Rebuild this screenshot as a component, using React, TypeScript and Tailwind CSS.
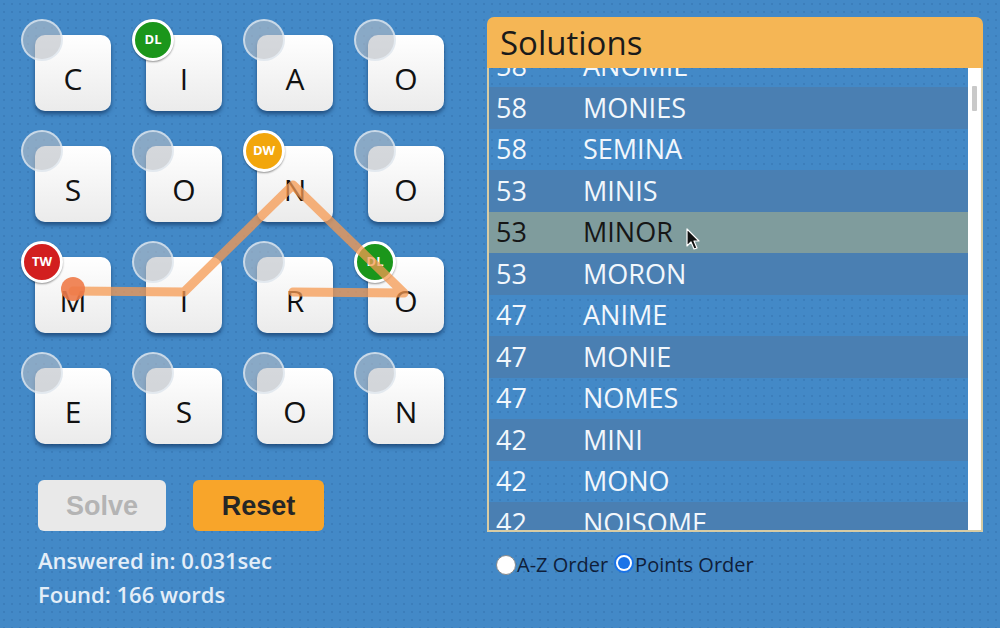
import React from 'react';

type Bonus = 'DL' | 'DW' | 'TW' | null;

const tiles: { letter: string; bonus: Bonus }[] = [
  { letter: 'C', bonus: null },
  { letter: 'I', bonus: 'DL' },
  { letter: 'A', bonus: null },
  { letter: 'O', bonus: null },
  { letter: 'S', bonus: null },
  { letter: 'O', bonus: null },
  { letter: 'N', bonus: 'DW' },
  { letter: 'O', bonus: null },
  { letter: 'M', bonus: 'TW' },
  { letter: 'I', bonus: null },
  { letter: 'R', bonus: null },
  { letter: 'O', bonus: 'DL' },
  { letter: 'E', bonus: null },
  { letter: 'S', bonus: null },
  { letter: 'O', bonus: null },
  { letter: 'N', bonus: null },
];

const solutions: [number, string][] = [
  [58, 'ANOMIE'],
  [58, 'MONIES'],
  [58, 'SEMINA'],
  [53, 'MINIS'],
  [53, 'MINOR'],
  [53, 'MORON'],
  [47, 'ANIME'],
  [47, 'MONIE'],
  [47, 'NOMES'],
  [42, 'MINI'],
  [42, 'MONO'],
  [42, 'NOISOME'],
];

function BonusBadge({ bonus }: { bonus: Bonus }) {
  if (!bonus) {
    return (
      <div className="absolute left-[-14px] top-[-16px] w-[42px] h-[42px] rounded-full bg-[rgba(185,190,196,0.6)] border-2 border-[rgba(235,242,250,0.65)]" />
    );
  }
  const color =
    bonus === 'DL' ? 'bg-[#1b961b]' : bonus === 'DW' ? 'bg-[#f2a60c]' : 'bg-[#d21f1f]';
  return (
    <div
      className={`absolute left-[-14px] top-[-16px] w-[42px] h-[42px] rounded-full ${color} border-[3px] border-white shadow-[0_1px_2px_rgba(0,0,0,0.4)] flex items-center justify-center text-white text-[13px] font-bold font-['Open_Sans',sans-serif]`}
    >
      {bonus}
    </div>
  );
}

export default function App() {
  return (
    <div className="w-[1000px] h-[628px] overflow-hidden flex bg-[#4389c7] bg-[radial-gradient(circle,rgba(25,70,125,0.16)_1px,transparent_1.3px)] bg-[length:8px_8px] font-['Open_Sans',sans-serif]">
      {/* Board */}
      <div className="w-[487px] shrink-0 pl-[35px] pt-[35px]">
        <div className="relative grid grid-cols-[repeat(4,76px)] gap-[35px]">
          {tiles.map((t, i) => (
            <div
              key={i}
              className="relative w-[76px] h-[76px] rounded-[10px] bg-linear-to-b from-white to-[#ebebeb] shadow-[0_3px_4px_rgba(10,40,80,0.6)] flex items-center justify-center pt-[10px] text-[30px] text-[#111]"
            >
              {t.letter}
              <BonusBadge bonus={t.bonus} />
            </div>
          ))}
          <svg className="absolute left-0 top-0 pointer-events-none" width="420" height="420">
            <polyline
              points="38,256 149,257 258,150 369,258 258,257"
              fill="none"
              stroke="#f59a52"
              strokeOpacity="0.75"
              strokeWidth="9"
              strokeLinejoin="round"
              strokeLinecap="round"
            />
            <circle cx="38" cy="254" r="12" fill="#ee7a48" fillOpacity="0.9" />
          </svg>
        </div>

        <div className="mt-[36px] pl-[3px] flex gap-[27px] font-['Liberation_Sans',sans-serif] font-bold text-[27px]">
          <button className="w-[128px] h-[51px] rounded-[6px] bg-[#e9e9e9] text-[#b4b4b4] pt-[2px]">Solve</button>
          <button className="w-[131px] h-[51px] rounded-[6px] bg-[#f8a52a] text-[#262626] pt-[2px]">Reset</button>
        </div>

        <div className="mt-[12px] pl-[3px] text-[22px] leading-[34px] font-semibold text-[#e4eef8]">
          <div>Answered in: 0.031sec</div>
          <div>Found: 166 words</div>
        </div>
      </div>

      {/* Solutions */}
      <div className="mt-[17px] w-[496px] shrink-0">
        <div className="h-[51px] rounded-t-[7px] bg-[#f5b655] pl-[13px] text-[33px] leading-[51px] text-[#1a1a1a]">
          Solutions
        </div>
        <div className="relative h-[464px] border-x-2 border-b-2 border-[#d8cca4] flex overflow-hidden">
          <div className="flex-1 overflow-hidden">
            <div className="-mt-[22.5px]">
              {solutions.map(([pts, word], i) => {
                const hover = word === 'MINOR';
                const bg = hover ? 'bg-[#7f9c9d]' : i % 2 === 1 ? 'bg-[#4a7fb2]' : 'bg-transparent';
                return (
                  <div
                    key={word}
                    className={`h-[41.5px] flex items-center text-[27px] ${bg} ${hover ? 'text-[#161616]' : 'text-[#f2f7fc]'}`}
                  >
                    <span className="w-[94px] pl-[7px]">{pts}</span>
                    <span>{word}</span>
                  </div>
                );
              })}
            </div>
          </div>
          <div className="w-[13px] bg-white pt-[18px] pl-[4px]">
            <div className="w-[5px] h-[25px] bg-[#c9c9c9] rounded-[1px]" />
          </div>
          <svg className="absolute left-[197px] top-[160px]" width="16" height="24" viewBox="0 0 16 24">
            <path d="M1 1 L1 18 L5 14 L8 21 L11 20 L8 13 L13 13 Z" fill="#111" stroke="#fff" strokeWidth="1.2" strokeLinejoin="round" />
          </svg>
        </div>

        <div className="mt-[18px] pl-[9px] flex items-center text-[20px] text-[#0f1e3a]">
          <span className="w-[20px] h-[20px] rounded-full bg-white border border-[#8a8a8a]" />
          <span className="ml-[1px]">A-Z Order</span>
          <span className="ml-[6px] w-[20px] h-[20px] rounded-full border-2 border-[#1a73e8] bg-white flex items-center justify-center -mt-[5px]">
            <span className="w-[12px] h-[12px] rounded-full bg-[#1a73e8]" />
          </span>
          <span className="ml-[1px]">Points Order</span>
        </div>
      </div>
    </div>
  );
}
